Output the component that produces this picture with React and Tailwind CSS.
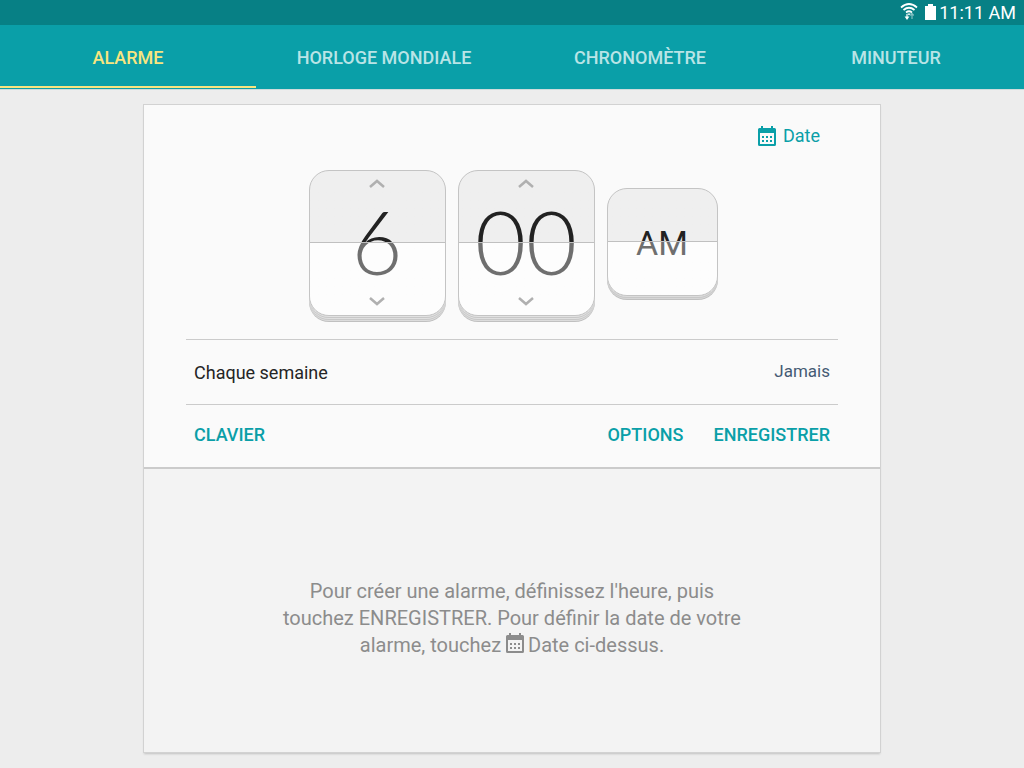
import { useState } from "react";

const TABS = ["ALARME", "HORLOGE MONDIALE", "CHRONOMÈTRE", "MINUTEUR"];

const pad = (n) => String(n).padStart(2, "0");

function CalendarIcon({ className }) {
  return (
    <svg viewBox="0 0 18 20" className={className} fill="currentColor" aria-hidden="true">
      <path
        fillRule="evenodd"
        d="M3 0h2v2h8V0h2v2h1.5A1.5 1.5 0 0 1 18 3.500V18.500A1.500 1.500 0 0 1 16.500 20H1.500A1.500 1.500 0 0 1 0 18.500V3.500A1.500 1.500 0 0 1 1.500 2H3zM2 7v11h14V7z"
      />
      <path d="M4 10h2v2H4zM8 10h2v2H8zM12 10h2v2h-2zM4 14h2v2H4zM8 14h2v2H8zM12 14h2v2h-2z" />
    </svg>
  );
}

function WifiIcon() {
  return (
    <svg viewBox="0 0 18 18" className="h-[18px] w-[18px]" fill="none" stroke="white" aria-hidden="true">
      <path d="M1 4.500Q9 -2.500 17 4.500M3.500 7Q9 2.500 14.500 7M6 9.500Q9 7 12 9.500" strokeWidth="1.700" />
      <path d="M7.300 10.500h3.400L9 12.500z" fill="white" stroke="none" />
      <path d="M7 11v3" strokeWidth="1.200" />
      <path d="M4.600 13.500h4.800L7 17z" fill="white" stroke="none" />
      <path d="M12 11v5M10.300 12.500L12 10.500l1.700 2" strokeWidth="1.200" opacity="0.5" />
    </svg>
  );
}

function BatteryIcon() {
  return (
    <svg viewBox="0 0 11 16" className="h-4 w-[11px]" fill="white" aria-hidden="true">
      <path d="M3 0h5v2h3v14H0V2h3z" />
    </svg>
  );
}

function Chevron({ down }) {
  return (
    <svg
      viewBox="0 0 16 9"
      className="h-[9px] w-4"
      fill="none"
      stroke="#b0b0b0"
      strokeWidth="2.500"
      aria-hidden="true"
    >
      <path d={down ? "M1 1l7 6 7-6" : "M1 8l7-6 7 6"} />
    </svg>
  );
}

function StatusBar() {
  return (
    <div className="flex h-[25px] items-center justify-end bg-[#078085] pr-2 text-white">
      <span className="flex items-center gap-[7px] pb-0.5">
        <WifiIcon />
        <BatteryIcon />
      </span>
      <span className="ml-[3px] text-[18px] leading-6">11:11 AM</span>
    </div>
  );
}

// lower half of a flip card, washes out the digits under it
function LowerFlap() {
  return (
    <span className="pointer-events-none absolute inset-x-0 top-[49%] bottom-0 border-t border-[#c0c0c0] bg-white/35" />
  );
}

function FlipCard({ label, value, onChange, onStep }) {
  return (
    <div className="h-[152px] w-[137px]">
      <div className="relative flex h-[146px] flex-col items-center justify-between overflow-hidden rounded-[20px] border border-[#c4c4c4] bg-linear-to-b from-[#efefef] from-49% to-[#fcfcfc] to-49% shadow-[0_1px_#e2e2e2,0_2px_#c8c8c8,0_3px_#e0e0e0,0_4px_#c8c8c8,0_5px_#dcdcdc,0_6px_#c0c0c0]">
        <button
          type="button"
          aria-label={`${label} +`}
          onClick={() => onStep(1)}
          className="flex h-6 w-full items-center justify-center"
        >
          <Chevron />
        </button>
        <input
          type="text"
          inputMode="numeric"
          aria-label={label}
          value={value}
          onChange={(e) => onChange(e.target.value)}
          className="h-[92px] w-full bg-transparent text-center font-['Lato','Roboto',sans-serif] text-[88px] leading-none font-light text-[#222222] outline-none"
        />
        <button
          type="button"
          aria-label={`${label} -`}
          onClick={() => onStep(-1)}
          className="relative z-10 flex h-7 w-full items-center justify-center"
        >
          <Chevron down />
        </button>
        <LowerFlap />
      </div>
    </div>
  );
}

function PeriodCard({ period, onToggle }) {
  return (
    <button type="button" onClick={onToggle} className="mb-1 block h-28 w-[111px]">
      <span className="relative -mt-1 flex h-[108px] items-center justify-center overflow-hidden rounded-[20px] border border-[#c4c4c4] bg-linear-to-b from-[#efefef] from-49% to-[#fcfcfc] to-49% pt-0.5 text-[34px] leading-10 text-[#222222] shadow-[0_1px_#dcdcdc,0_2px_#c8c8c8,0_3px_#d6d6d6,0_4px_#c0c0c0]">
        {period}
        <LowerFlap />
      </span>
    </button>
  );
}

export default function App() {
  const [tab, setTab] = useState(0);
  const [hour, setHour] = useState(6);
  const [minute, setMinute] = useState(0);
  const [period, setPeriod] = useState("AM");

  const stepHour = (d) => setHour((h) => ((h - 1 + d + 12) % 12) + 1);
  const stepMinute = (d) => setMinute((m) => (m + d + 60) % 60);

  return (
    <div className="flex min-h-screen flex-col bg-[#ededed] font-['Roboto','Liberation_Sans',sans-serif]">
      <header className="border-b border-[#cfdcdc]">
        <StatusBar />
        <nav role="tablist" className="grid grid-cols-4 bg-[#0a9fa8]">
          {TABS.map((name, i) => (
            <button
              key={name}
              type="button"
              role="tab"
              aria-selected={tab === i}
              onClick={() => setTab(i)}
              className={`mb-px h-[63px] border-b-2 pt-1 text-[18px] leading-6 font-medium ${
                tab === i ? "border-[#f8e580] text-[#f8e580]" : "border-transparent text-[#b9e4e6]"
              }`}
            >
              {name}
            </button>
          ))}
        </nav>
      </header>

      <main className="flex flex-1 flex-col px-36 pt-[15px] pb-4">
        <div className="flex flex-1 flex-col shadow-[0_0_0_1px_#d2d2d2,0_2px_2px_#c0c0c0]">
          {/* Alarm editor */}
          <section className="border-b-2 border-[#cbcbcb] bg-[#fafafa] px-[42px]">
            <div className="flex justify-end pt-[15px] pr-[18px]">
              <button type="button" className="flex items-center gap-[7px] text-[18px] leading-8 text-[#0a9fa8]">
                <CalendarIcon className="h-5 w-[18px]" />
                Date
              </button>
            </div>

            <div className="flex items-center justify-center gap-3 pt-[18px] pb-[17px] pl-0.5">
              <FlipCard
                label="Heures"
                value={hour}
                onChange={(v) => setHour(Math.min(12, Number(v) || 1))}
                onStep={stepHour}
              />
              <FlipCard
                label="Minutes"
                value={pad(minute)}
                onChange={(v) => setMinute(Number(v.slice(-2)) % 60 || 0)}
                onStep={stepMinute}
              />
              <PeriodCard period={period} onToggle={() => setPeriod(period === "AM" ? "PM" : "AM")} />
            </div>

            <button
              type="button"
              className="flex h-[66px] w-full items-center justify-between border-y border-[#cbcbcb] px-2 text-[18px] text-[#252525]"
            >
              <span>Chaque semaine</span>
              <span className="text-[17px] text-[#455a74]">Jamais</span>
            </button>

            <div className="flex h-[62px] items-center gap-[30px] px-2 pb-1 text-[18px] font-medium text-[#0a9fa8]">
              <button type="button" className="mr-auto">
                CLAVIER
              </button>
              <button type="button">OPTIONS</button>
              <button type="button">ENREGISTRER</button>
            </div>
          </section>

          {/* Empty list */}
          <section className="flex flex-1 items-center justify-center bg-[#f3f3f3] pt-4">
            <p className="max-w-[460px] text-center text-[20px] leading-[27px] text-[#8c8c8c]">
              Pour créer une alarme, définissez l'heure, puis touchez ENREGISTRER. Pour définir la date de votre
              <br />
              alarme, touchez <CalendarIcon className="mr-1 inline h-5 w-[18px] align-text-top" />
              Date ci-dessus.
            </p>
          </section>
        </div>
      </main>
    </div>
  );
}
